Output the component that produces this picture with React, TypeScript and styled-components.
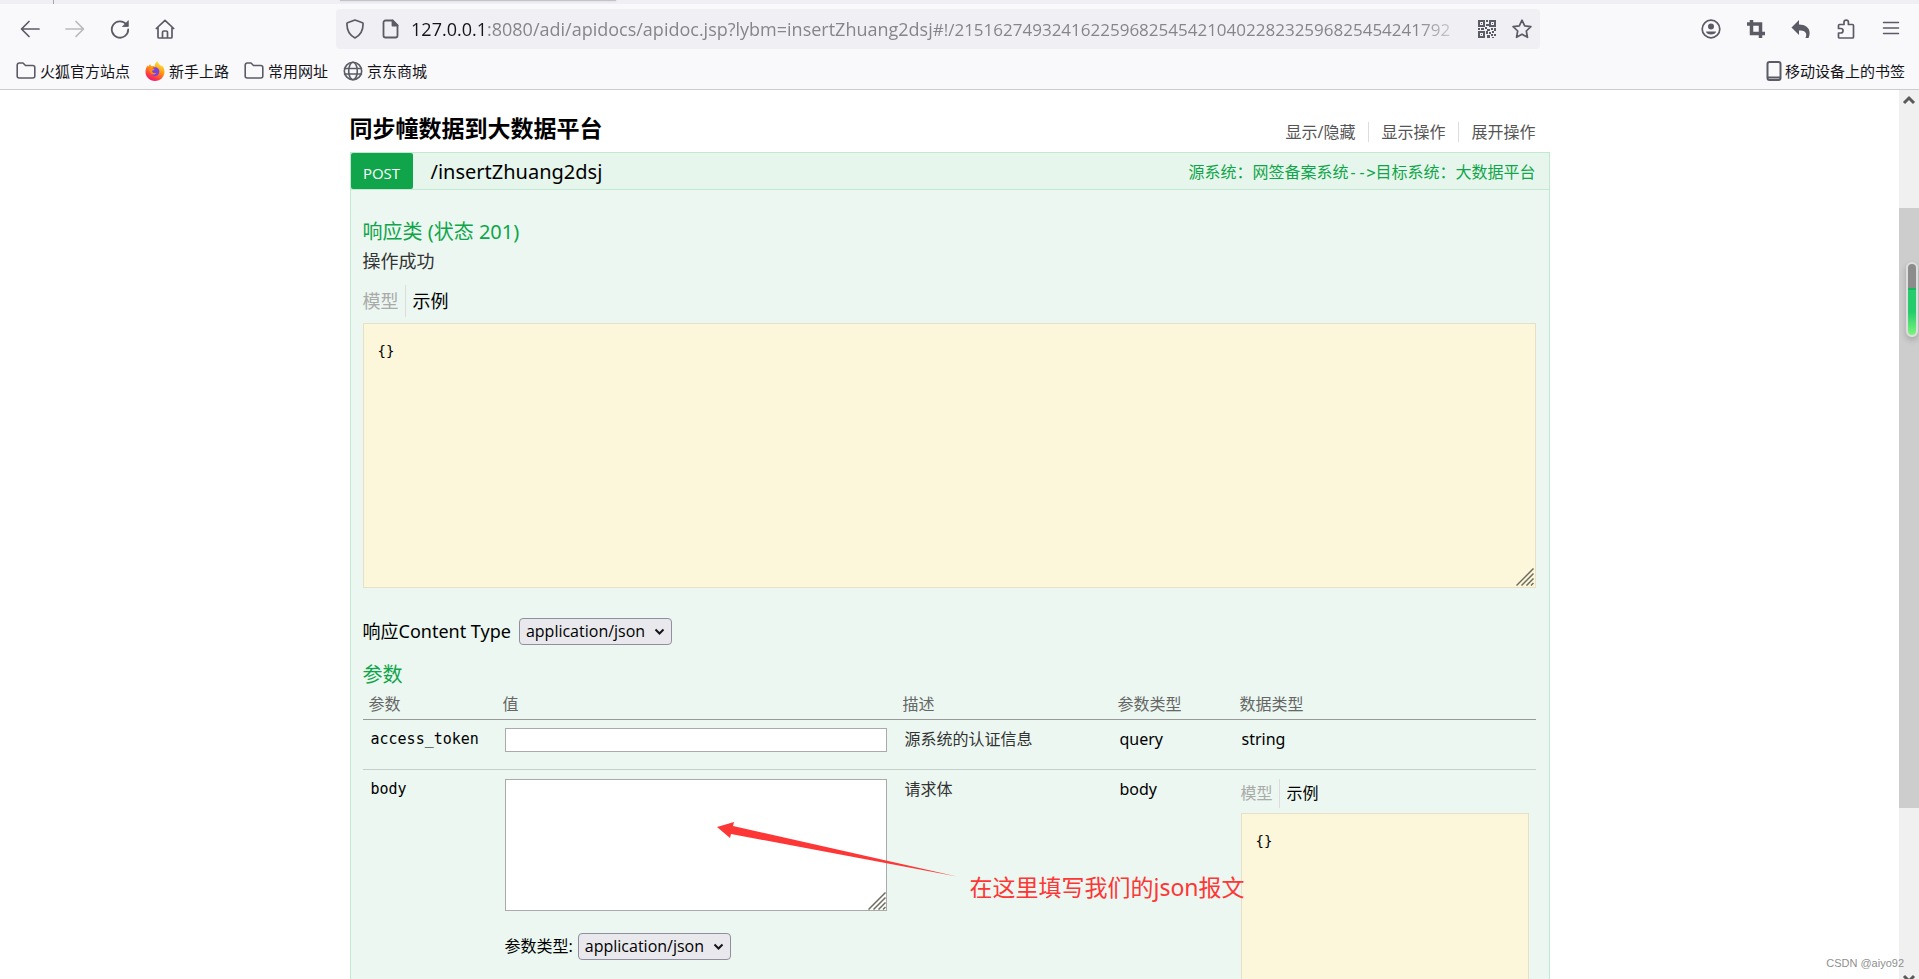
import React from 'react';
import styled, { createGlobalStyle } from 'styled-components';

const sans = '"Noto Sans", "Noto Sans CJK SC", sans-serif';
const uiSans = '"Open Sans", "Noto Sans CJK SC", sans-serif';
const mono = '"DejaVu Sans Mono", "Noto Sans CJK SC", monospace';
const green = '#10a54a';

const GlobalStyle = createGlobalStyle`
  * { box-sizing: border-box; }
  body { margin: 0; overflow: hidden; background: #fff; color: #000; font-family: ${sans}; }
  button, input, select, textarea { font-family: inherit; }
`;

const Window = styled.div`
  display: flex;
  flex-direction: column;
  height: 100vh;
`;

const TabStrip = styled.div`
  display: flex;
  flex: none;
  height: 4px;
  background: #f0f0f4;
`;

const TabDivider = styled.span`
  width: 54px;
  border-right: 1px solid #a6a6ac;
`;

const ActiveTab = styled.span`
  width: 276px;
  height: 1px;
  margin-left: 286px;
  background: #c3c3c8;
  box-shadow: 0 0 2px #c3c3c8;
`;

const Toolbar = styled.nav`
  display: flex;
  flex: none;
  align-items: center;
  justify-content: space-between;
  height: 50px;
  padding: 0 18px 0 20px;
  background: #f9f9fb;
`;

const NavGroup = styled.div<{ $gap: number }>`
  display: flex;
  align-items: center;
  gap: ${(p) => p.$gap}px;
`;

const IconButton = styled.button<{ $dim?: boolean }>`
  display: flex;
  padding: 0;
  border: 0;
  background: none;
  color: #5b5b66;
  opacity: ${(p) => (p.$dim ? 0.4 : 1)};
`;

const AddressBar = styled.div`
  display: flex;
  align-items: center;
  gap: 10px;
  width: 64%;
  height: 40px;
  padding: 0 8px 0 9px;
  border-radius: 4px;
  background: #f0f0f4;
`;

const Address = styled.div`
  flex: 1;
  min-width: 0;
  overflow: hidden;
  font-family: ${uiSans};
  font-size: 18px;
  line-height: 24px;
  white-space: nowrap;
  color: #85858b;
  mask-image: linear-gradient(to right, #000 calc(100% - 50px), transparent);
`;

const Host = styled.span`
  color: #15141a;
`;

const Hash = styled.span`
  font-size: 17px;
`;

const BookmarkBar = styled.nav`
  display: flex;
  flex: none;
  align-items: center;
  gap: 15px;
  height: 36px;
  padding: 0 14px 2px 16px;
  border-bottom: 1px solid #ccccd0;
  background: #f9f9fb;
`;

const Bookmark = styled.a<{ $end?: boolean }>`
  display: flex;
  align-items: center;
  gap: ${(p) => (p.$end ? 1 : 4)}px;
  margin-left: ${(p) => (p.$end ? 'auto' : 0)};
  color: #15141a;
  font-size: 15px;
  line-height: 20px;
  text-decoration: none;
  & > svg { color: #5b5b66; }
`;

const Viewport = styled.div`
  display: flex;
  flex: 1;
  min-height: 0;
`;

const Page = styled.main`
  flex: 1;
  min-width: 0;
  overflow: hidden;
`;

const Container = styled.div`
  max-width: 1200px;
  margin: 0 auto;
`;

const ResourceHeader = styled.header`
  display: flex;
  align-items: flex-end;
  justify-content: space-between;
  height: 62px;
  padding: 0 14px 8px 0;
`;

const Title = styled.h1`
  margin: 0;
  font-size: 23px;
  line-height: 32px;
`;

const OptionList = styled.ul`
  display: flex;
  margin: 0;
  padding: 0 0 2px;
  list-style: none;
`;

const Option = styled.li`
  padding: 0 13px 0 12px;
  border-right: 1px solid #ddd;
  line-height: 20px;
  &:last-child { padding-right: 0; border-right: 0; }
`;

const OptionLink = styled.a`
  color: #555;
  font-size: 16px;
  text-decoration: none;
`;

const Operation = styled.section`
  border: 1px solid #c3e8d1;
  background: #ebf7f0;
`;

const OperationHeader = styled.div`
  display: flex;
  align-items: center;
  height: 37px;
  padding-right: 13px;
  border-bottom: 1px solid #c3e8d1;
  background: #e7f6ec;
`;

const Method = styled.a`
  width: 62px;
  padding-top: 4px;
  border-radius: 2px;
  background: ${green};
  color: #fff;
  font-family: ${uiSans};
  font-size: 15px;
  line-height: 32px;
  text-align: center;
  text-decoration: none;
`;

const Path = styled.a`
  margin-left: 18px;
  padding-top: 2px;
  color: #000;
  font-size: 20px;
  line-height: 28px;
  text-decoration: none;
`;

const Summary = styled.a`
  margin-left: auto;
  padding-top: 2px;
  color: ${green};
  font-size: 16px;
  line-height: 24px;
  text-decoration: none;
`;

const Arrow = styled.span`
  font-family: ${mono};
  font-size: 15px;
`;

const OperationBody = styled.div`
  padding: 28px 13px 40px 12px;
`;

const Heading = styled.h2`
  margin: 0;
  color: ${green};
  font-size: 20px;
  font-weight: 400;
  line-height: 28px;
`;

const Note = styled.p`
  margin: 0 0 9px;
  color: #333;
  font-size: 18px;
  line-height: 30px;
`;

const Tabs = styled.div<{ $small?: boolean }>`
  display: flex;
  margin-bottom: ${(p) => (p.$small ? 5 : 6)}px;
  font-size: ${(p) => (p.$small ? 16 : 18)}px;
  line-height: ${(p) => (p.$small ? 29 : 32)}px;
`;

const Tab = styled.button<{ $active?: boolean }>`
  padding: ${(p) => (p.$active ? '0 0 0 7px' : '0 6px 0 0')};
  border: 0;
  border-right: ${(p) => (p.$active ? 0 : 1)}px solid #ddd;
  background: none;
  color: ${(p) => (p.$active ? '#000' : '#aaa')};
  font-size: inherit;
  line-height: inherit;
`;

const Snippet = styled.div`
  position: relative;
  height: 265px;
  padding: 14px;
  border: 1px solid #e5e0c6;
  background: #fcf6db;
`;

const Code = styled.pre`
  margin: 0;
  font-family: ${mono};
  font-size: 14px;
  line-height: 26px;
`;

const Grip = styled.svg`
  position: absolute;
  right: 1px;
  bottom: 1px;
`;

const ContentType = styled.label`
  display: flex;
  align-items: center;
  gap: 8px;
  margin: 29px 0 16px;
  font-size: 18px;
  line-height: 28px;
`;

const ParamContentType = styled.label`
  display: flex;
  align-items: center;
  gap: 5px;
  margin-top: 22px;
  font-size: 16px;
`;

const SelectFrame = styled.span`
  position: relative;
  display: flex;
  & > svg { position: absolute; right: 7px; top: 8px; pointer-events: none; }
`;

const SelectInput = styled.select`
  width: 153px;
  height: 27px;
  padding: 0 0 0 6px;
  appearance: none;
  border: 1px solid #8f8f9d;
  border-radius: 4px;
  background: #e9e9ed;
  color: #000;
  font-family: ${uiSans};
  font-size: 16px;
`;

const ParamTable = styled.table`
  width: 100%;
  table-layout: fixed;
  border-collapse: collapse;
`;

const HeadCell = styled.th<{ $width?: number }>`
  width: ${(p) => (p.$width ? `${p.$width}px` : 'auto')};
  height: 30px;
  padding: 0 0 0 6px;
  border-bottom: 1px solid #999;
  color: #666;
  font-size: 16px;
  font-weight: 400;
  line-height: 24px;
  text-align: left;
`;

const Row = styled.tr`
  border-bottom: 1px solid #c5cfca;
`;

const Cell = styled.td<{ $muted?: boolean }>`
  padding: 7px 8px;
  color: ${(p) => (p.$muted ? '#333' : '#000')};
  font-size: 16px;
  line-height: 24px;
  vertical-align: top;
`;

const NameCell = styled(Cell)`
  font-family: ${mono};
  font-size: 15px;
`;

const ValueCell = styled(Cell)`
  padding: 8px 10px 17px 8px;
`;

const ModelCell = styled(Cell)`
  padding: 9px 7px;
`;

const TextInput = styled.input`
  display: block;
  width: 100%;
  height: 24px;
  border: 1px solid #aaa;
  background: #fff;
`;

const BodyFrame = styled.div`
  position: relative;
  z-index: 1;
  margin-top: 1px;
`;

const BodyInput = styled.textarea`
  display: block;
  width: 100%;
  height: 132px;
  border: 1px solid #aaa;
  background: #fff;
  resize: none;
`;

const Pointer = styled.svg`
  position: absolute;
  left: 210px;
  top: 42px;
  overflow: visible;
`;

const Callout = styled.p`
  position: absolute;
  left: 465px;
  top: 91px;
  margin: 0;
  color: #fd3636;
  font-size: 23px;
  line-height: 34px;
  white-space: nowrap;
`;

const ScrollTrack = styled.div`
  position: relative;
  display: flex;
  flex: none;
  flex-direction: column;
  align-items: center;
  width: 20px;
  overflow: hidden;
  background: #f0f0f0;
`;

const ScrollThumb = styled.div`
  flex: none;
  align-self: stretch;
  height: 600px;
  margin: 118px 0 auto;
  background: #cdcdcd;
`;

const ScrollArrow = styled.svg<{ $end?: boolean }>`
  position: absolute;
  left: 3px;
  ${(p) => (p.$end ? 'bottom: -10px; transform: scaleY(-1);' : 'top: 0;')}
`;

const Gauge = styled.div`
  position: absolute;
  top: 172px;
  right: 1px;
  width: 12px;
  height: 75px;
  border: 2px solid #dedede;
  border-radius: 6px;
  background: linear-gradient(#8c8c8c 0 24px, #18b862 24px 26px, #25cc6b 26px 48px, #7cf57c);
  box-shadow: 0 3px 6px rgba(0, 0, 0, 0.2);
`;

const Watermark = styled.div`
  position: absolute;
  right: 15px;
  bottom: 7px;
  color: #8f8f8f;
  font-family: "Liberation Sans", sans-serif;
  font-size: 11px;
  line-height: 18px;
`;

type IconProps = { children: React.ReactNode; size?: number; box?: number; width?: number };

const Icon = ({ children, size = 20, box = 20, width = 2 }: IconProps) => (
  <svg width={size} height={size} viewBox={`0 0 ${box} ${box}`} fill="none" stroke="currentColor"
    strokeWidth={width} strokeLinecap="round" strokeLinejoin="round" aria-hidden="true">
    {children}
  </svg>
);

const Folder = () => (
  <Icon width={1.6}>
    <path d="M1.200 4a2 2 0 0 1 2-2h3.800l2.500 2.500h7.300a2 2 0 0 1 2 2v8.500a2 2 0 0 1-2 2h-13.600a2 2 0 0 1-2-2z" />
  </Icon>
);

const Firefox = () => (
  <svg width="20" height="20" viewBox="0 0 20 20" aria-hidden="true">
    <defs>
      <linearGradient id="flame" x1="0.8" y1="0" x2="0.3" y2="1">
        <stop offset="0" stopColor="#fff44f" />
        <stop offset="0.45" stopColor="#ff980e" />
        <stop offset="0.8" stopColor="#ff3647" />
        <stop offset="1" stopColor="#e31587" />
      </linearGradient>
    </defs>
    <path fill="url(#flame)" d="M12.500 0c.5 2.500 2.500 3.500 4 5.500.300-.5.300-1 .200-1.500C18.600 6 19.600 8.500 19.500 11c-.2 5-4.300 9-9.500 9S.5 16 .5 10.800C.5 8 1.500 6 3 4.300c0 .7.200 1 .4 1.400.4-1.200 1-2 1.900-2.700 0 1 .5 1.800 1.200 2.200 1-.2 2-.1 3 .3C9.500 3.500 10.500 1.500 12.500 0z" />
    <circle cx="10" cy="10.600" r="4.300" fill="#7542e5" />
    <path fill="#ff8a16" d="M4 7.500c2-.8 4-.5 5.500.5 0 1.200-1.500 1.200-2.500 2 .5 2 2.500 2.600 4.500 1.500-1 3-6.500 3.500-7.500-4z" />
  </svg>
);

const Qr = () => (
  <svg width="18" height="18" viewBox="0 0 18 18" fill="none" stroke="#5b5b66" strokeWidth="2" aria-hidden="true">
    <path d="M1 1h5v5H1zM12 1h5v5h-5zM1 12h5v5H1z" />
    <path fill="#5b5b66" stroke="none" d="M3 3h1v1H3zM14 3h1v1h-1zM3 14h1v1H3zM8 0h2v2H8zM8 4h3v2H8zM7 7h2v2H7zM0 8h2v2H0zM3 8h3v2H3zM9 9h3v2H9zM13 8h2v2h-2zM16 8h2v3h-2zM8 11h2v3H8zM11 12h2v2h-2zM14 11h2v2h-2zM9 15h3v3H9zM13 14h2v2h-2zM16 14h2v2h-2zM14 17h2v1h-2z" />
  </svg>
);

const Chevron = () => (
  <svg width="11" height="11" viewBox="0 0 11 11" fill="none" stroke="#15141a" strokeWidth="2" aria-hidden="true">
    <path d="M1.500 3.500l4 4 4-4" />
  </svg>
);

const ResizeGrip = () => (
  <Grip width="18" height="18" viewBox="0 0 18 18" stroke="#6d6d60" strokeWidth="1.500" aria-hidden="true">
    <path d="M0.500 17.500L17.500 0.500M5.500 17.500L17.500 5.500M10.500 17.500L17.500 10.500M15 17.500L17.500 15" />
  </Grip>
);

const JsonSelect = ({ id }: { id: string }) => (
  <SelectFrame>
    <SelectInput id={id} defaultValue="application/json">
      <option>application/json</option>
    </SelectInput>
    <Chevron />
  </SelectFrame>
);

const ModelTabs = ({ small }: { small?: boolean }) => (
  <Tabs $small={small}>
    <Tab type="button">模型</Tab>
    <Tab type="button" $active>示例</Tab>
  </Tabs>
);

export default function App() {
  return (
    <Window>
      <GlobalStyle />
      <TabStrip><TabDivider /><ActiveTab /></TabStrip>
      <Toolbar>
        <NavGroup $gap={25}>
          <IconButton aria-label="后退"><Icon width={1.7}><path d="M19 10H2M9 2.500L1.500 10 9 17.500" /></Icon></IconButton>
          <IconButton aria-label="前进" $dim><Icon width={1.7}><path d="M1 10h17M11 2.500l7.500 7.500-7.500 7.500" /></Icon></IconButton>
          <IconButton aria-label="刷新"><Icon width={1.800}><path d="M16.500 5.500A8.200 8.200 0 1 0 18.200 10.500" /><path d="M18.300 2v5.500h-5.500z" fill="currentColor" strokeWidth={0.800} /></Icon></IconButton>
          <IconButton aria-label="主页"><Icon width={1.700}><path d="M1.300 9.500L10 1.300l8.700 8.200M3 8.500V18a1 1 0 0 0 1 1h12a1 1 0 0 0 1-1V8.500M7.500 19v-5.500a1.500 1.500 0 0 1 1.500-1.500h2a1.500 1.500 0 0 1 1.500 1.500V19" /></Icon></IconButton>
        </NavGroup>
        <AddressBar>
          <NavGroup $gap={16}>
            <IconButton aria-label="跟踪保护"><Icon width={1.700}><path d="M10 1l7.500 2.800a1 1 0 0 1 .600 1C18.100 11 16 16 10 19 4 16 1.900 11 1.900 4.800a1 1 0 0 1 .600-1z" /></Icon></IconButton>
            <IconButton aria-label="网站信息"><Icon width={1.800}><path d="M11.500 1.500H4.500a2 2 0 0 0-2 2v13a2 2 0 0 0 2 2h10a2 2 0 0 0 2-2v-10z" /><path d="M11.500 1.500v5h5z" fill="currentColor" /></Icon></IconButton>
          </NavGroup>
          <Address><Host>127.0.0.1</Host>:8080/adi/apidocs/apidoc.jsp?lybm=insertZhuang2dsj<Hash>#!/215162749324162259682545421040228232596825454241792</Hash></Address>
          <NavGroup $gap={16}>
            <IconButton aria-label="二维码"><Qr /></IconButton>
            <IconButton aria-label="添加书签"><Icon width={1.700}><path d="M10 1.200l2.700 5.700 6.200.8-4.600 4.300 1.200 6.300L10 15.200l-5.500 3.100 1.200-6.300L1.100 7.700l6.200-.8z" /></Icon></IconButton>
          </NavGroup>
        </AddressBar>
        <NavGroup $gap={25}>
          <IconButton aria-label="账户"><Icon width={1.700}><circle cx="10" cy="10" r="8.800" /><circle cx="10" cy="7.500" r="3" fill="currentColor" stroke="none" /><path d="M5 12.500h10c0 4-10 4-10 0z" fill="currentColor" stroke="none" /></Icon></IconButton>
          <IconButton aria-label="截图"><Icon width={3.500}><path d="M5.500 1v13.500H19M1 5h13.500v14" strokeLinecap="butt" strokeLinejoin="miter" /></Icon></IconButton>
          <IconButton aria-label="撤销"><Icon><path d="M8 1v4.500c8 0 13 5 9.500 13.500h-3c2-5 0-7.500-6.500-7.500V16L.5 8.500z" fill="currentColor" stroke="none" /></Icon></IconButton>
          <IconButton aria-label="扩展"><Icon width={1.700}><path d="M2.500 8V6.500a1 1 0 0 1 1-1H8V3.300a2.200 2.200 0 0 1 4.400 0v2.200h4.100a1 1 0 0 1 1 1V18a1 1 0 0 1-1 1h-13a1 1 0 0 1-1-1v-4h2.300a2 2 0 0 0 0-4.500H2.500z" /></Icon></IconButton>
          <IconButton aria-label="菜单"><Icon width={1.500}><path d="M2.500 3.500h15M2.500 9h15M2.500 14.500h15" /></Icon></IconButton>
        </NavGroup>
      </Toolbar>
      <BookmarkBar>
        <Bookmark href="#"><Folder />火狐官方站点</Bookmark>
        <Bookmark href="#"><Firefox />新手上路</Bookmark>
        <Bookmark href="#"><Folder />常用网址</Bookmark>
        <Bookmark href="#"><Icon width={1.600}><circle cx="10" cy="10" r="8.700" /><ellipse cx="10" cy="10" rx="4.300" ry="8.700" /><path d="M1.500 7.500h17M1.500 13h17" /></Icon>京东商城</Bookmark>
        <Bookmark href="#" $end><Icon width={2}><rect x="3.500" y="1" width="13" height="18" rx="2" /><path d="M4 16.500h12" /></Icon>移动设备上的书签</Bookmark>
      </BookmarkBar>
      <Viewport>
        <Page>
          <Container>
            <ResourceHeader>
              <Title>同步幢数据到大数据平台</Title>
              <OptionList>
                <Option><OptionLink href="#">显示/隐藏</OptionLink></Option>
                <Option><OptionLink href="#">显示操作</OptionLink></Option>
                <Option><OptionLink href="#">展开操作</OptionLink></Option>
              </OptionList>
            </ResourceHeader>
            <Operation>
              <OperationHeader>
                <Method href="#">POST</Method>
                <Path href="#">/insertZhuang2dsj</Path>
                <Summary href="#">源系统：网签备案系统<Arrow>--&gt;</Arrow>目标系统：大数据平台</Summary>
              </OperationHeader>
              <OperationBody>
                <Heading>响应类 (状态 201)</Heading>
                <Note>操作成功</Note>
                <ModelTabs />
                <Snippet><Code>{'{}'}</Code><ResizeGrip /></Snippet>
                <ContentType htmlFor="response-type">响应Content Type<JsonSelect id="response-type" /></ContentType>
                <Heading>参数</Heading>
                <ParamTable>
                  <thead>
                    <tr>
                      <HeadCell $width={134}>参数</HeadCell>
                      <HeadCell $width={400}>值</HeadCell>
                      <HeadCell $width={215}>描述</HeadCell>
                      <HeadCell $width={122}>参数类型</HeadCell>
                      <HeadCell>数据类型</HeadCell>
                    </tr>
                  </thead>
                  <tbody>
                    <Row>
                      <NameCell><label htmlFor="token">access_token</label></NameCell>
                      <ValueCell><TextInput id="token" type="text" /></ValueCell>
                      <Cell $muted>源系统的认证信息</Cell>
                      <Cell>query</Cell>
                      <Cell>string</Cell>
                    </Row>
                    <Row>
                      <NameCell><label htmlFor="payload">body</label></NameCell>
                      <ValueCell>
                        <BodyFrame>
                          <BodyInput id="payload" />
                          <ResizeGrip />
                          <Pointer width="244" height="60" viewBox="0 0 244 60" fill="#fd3636" aria-hidden="true">
                            <path d="M2 6L19 1l-1 4 224 50.500L16 13l-1 4z" />
                          </Pointer>
                          <Callout>在这里填写我们的json报文</Callout>
                        </BodyFrame>
                        <ParamContentType htmlFor="param-type">参数类型:<JsonSelect id="param-type" /></ParamContentType>
                      </ValueCell>
                      <Cell $muted>请求体</Cell>
                      <Cell>body</Cell>
                      <ModelCell>
                        <ModelTabs small />
                        <Snippet><Code>{'{}'}</Code></Snippet>
                      </ModelCell>
                    </Row>
                  </tbody>
                </ParamTable>
              </OperationBody>
            </Operation>
          </Container>
        </Page>
        <ScrollTrack>
          <ScrollArrow width="14" height="18" viewBox="0 0 14 18" fill="none" stroke="#5a5a5a" strokeWidth="3" aria-hidden="true"><path d="M2 13l5-5 5 5" /></ScrollArrow>
          <ScrollThumb />
          <ScrollArrow $end width="14" height="18" viewBox="0 0 14 18" fill="none" stroke="#5a5a5a" strokeWidth="3" aria-hidden="true"><path d="M2 13l5-5 5 5" /></ScrollArrow>
          <Gauge />
        </ScrollTrack>
      </Viewport>
      <Watermark>CSDN @aiyo92</Watermark>
    </Window>
  );
}
